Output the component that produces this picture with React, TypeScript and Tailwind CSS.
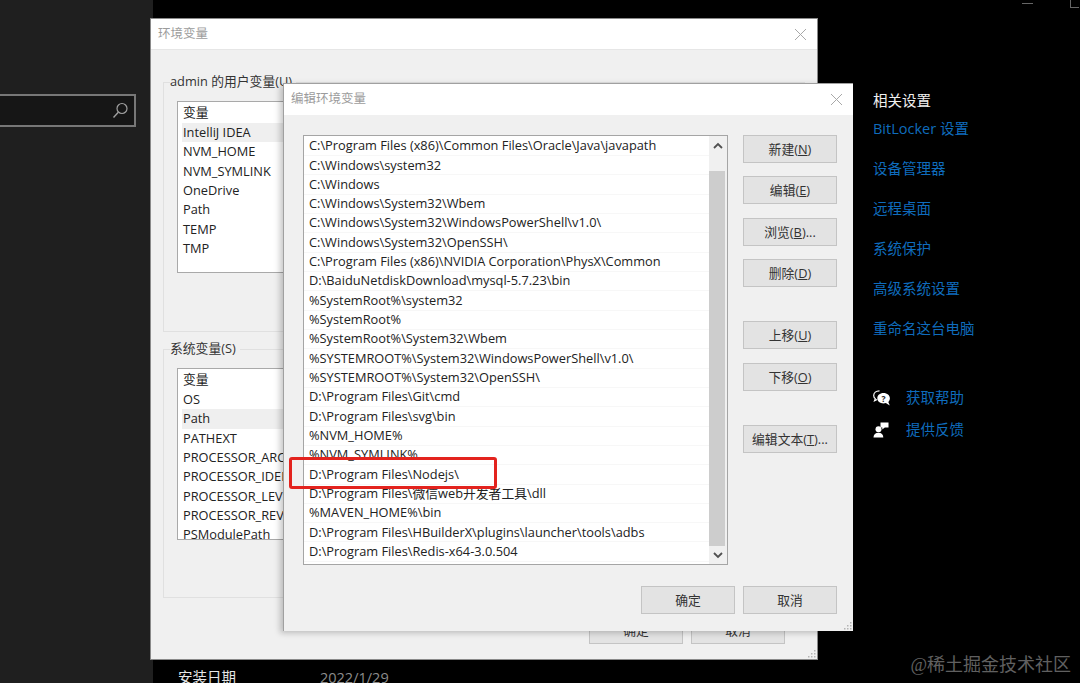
import React from 'react';

const FONT = 'font-["Open_Sans","Noto_Sans_CJK_SC",sans-serif]';

const pathRows = [
  'C:\\Program Files (x86)\\Common Files\\Oracle\\Java\\javapath',
  'C:\\Windows\\system32',
  'C:\\Windows',
  'C:\\Windows\\System32\\Wbem',
  'C:\\Windows\\System32\\WindowsPowerShell\\v1.0\\',
  'C:\\Windows\\System32\\OpenSSH\\',
  'C:\\Program Files (x86)\\NVIDIA Corporation\\PhysX\\Common',
  'D:\\BaiduNetdiskDownload\\mysql-5.7.23\\bin',
  '%SystemRoot%\\system32',
  '%SystemRoot%',
  '%SystemRoot%\\System32\\Wbem',
  '%SYSTEMROOT%\\System32\\WindowsPowerShell\\v1.0\\',
  '%SYSTEMROOT%\\System32\\OpenSSH\\',
  'D:\\Program Files\\Git\\cmd',
  'D:\\Program Files\\svg\\bin',
  '%NVM_HOME%',
  '%NVM_SYMLINK%',
  'D:\\Program Files\\Nodejs\\',
  'D:\\Program Files\\微信web开发者工具\\dll',
  '%MAVEN_HOME%\\bin',
  'D:\\Program Files\\HBuilderX\\plugins\\launcher\\tools\\adbs',
  'D:\\Program Files\\Redis-x64-3.0.504',
];

const userVars = ['IntelliJ IDEA', 'NVM_HOME', 'NVM_SYMLINK', 'OneDrive', 'Path', 'TEMP', 'TMP'];
const systemVars = ['OS', 'Path', 'PATHEXT', 'PROCESSOR_ARCHITECTURE', 'PROCESSOR_IDENTIFIER', 'PROCESSOR_LEVEL', 'PROCESSOR_REVISION', 'PSModulePath'];

const CloseIcon = () => (
  <svg width="13" height="13" viewBox="0 0 13 13" className="text-[#a8a8a8]">
    <path d="M1 1 L12 12 M12 1 L1 12" stroke="currentColor" strokeWidth="1" fill="none" />
  </svg>
);

const ResizeGrip = () => (
  <svg width="9" height="9" viewBox="0 0 9 9" className="absolute bottom-[1px] right-[1px]">
    <path d="M7 1h1.500v1.500H7zM4 4h1.500v1.500H4zM7 4h1.500v1.500H7zM1 7h1.500v1.500H1zM4 7h1.500v1.500H4zM7 7h1.500v1.500H7z" fill="#b4b4b4" />
  </svg>
);

const Button = ({ label, mn, suffix, className = '' }: { label: string; mn?: string; suffix?: string; className?: string }) => (
  <div className={`flex h-[28px] w-[94px] items-center justify-center border border-[#c4c4c4] bg-[#e3e3e3] text-[12.800px] leading-none text-[#333] ${className}`}>
    {label}
    {mn && (
      <>
        (<span className="underline">{mn}</span>)
      </>
    )}
    {suffix}
  </div>
);

const VarList = ({ rows, selected }: { rows: string[]; selected: number }) => (
  <div className="h-[172px] w-[300px] overflow-hidden border border-[#a9a9a9] bg-white pl-[4px] pt-[1px] text-[12.800px] text-[#222]">
    <div className="flex h-[20px] items-center pl-[1px]">变量</div>
    {rows.map((r, i) => (
      <div key={r} className={`flex h-[19.33px] items-center whitespace-nowrap pl-[1px] ${i === selected ? 'bg-[#efefef]' : ''}`}>
        {r}
      </div>
    ))}
  </div>
);

const GroupBox = ({ label, className = '', children }: { label: string; className?: string; children: React.ReactNode }) => (
  <div className={`w-[642px] border border-[#e0e0e0] ${className}`}>
    <div className="-mt-[11px] ml-[6px] w-fit bg-[#f0f0f0] pr-[4px] text-[12.800px] leading-[18px] text-[#333]">{label}</div>
    {children}
  </div>
);

const EnvWindow = () => (
  <div className="absolute left-[150px] top-[18px] flex h-[642px] w-[668px] flex-col border border-[#8a8a8a] bg-[#f0f0f0]">
    <div className="flex h-[31px] shrink-0 items-center justify-between border-b border-[#e6e6e6] bg-white pl-[7px] pr-[10px] text-[12.500px] text-[#9c9c9c]">
      <span>环境变量</span>
      <CloseIcon />
    </div>
    <div className="flex flex-1 flex-col pl-[12px] pt-[32px]">
      <GroupBox label="admin 的用户变量(U)" className="h-[250px]">
        <div className="pl-[13px] pt-[11px]">
          <VarList rows={userVars} selected={0} />
        </div>
      </GroupBox>
      <GroupBox label="系统变量(S)" className="mt-[17px] h-[249px]">
        <div className="pl-[13px] pt-[11px]">
          <VarList rows={systemVars} selected={1} />
        </div>
      </GroupBox>
      <div className="ml-[426px] mt-[18px] flex gap-[8px]">
        <Button label="确定" />
        <Button label="取消" />
      </div>
    </div>
    <ResizeGrip />
  </div>
);

const Scrollbar = () => (
  <div className="flex w-[18px] shrink-0 flex-col bg-[#f0f0f0]">
    <div className="flex h-[35px] w-full justify-center pt-[6px]">
      <svg width="10" height="8" viewBox="0 0 10 8">
        <path d="M1 6 L5 2 L9 6" stroke="#505050" strokeWidth="1.800" fill="none" />
      </svg>
    </div>
    <div className="w-[16px] flex-1 bg-[#cdcdcd]" />
    <div className="flex h-[18px] w-full items-center justify-center">
      <svg width="10" height="8" viewBox="0 0 10 8">
        <path d="M1 2 L5 6 L9 2" stroke="#505050" strokeWidth="1.800" fill="none" />
      </svg>
    </div>
  </div>
);

const EditWindow = () => (
  <div className="absolute left-[283px] top-[83px] flex h-[548px] w-[570px] flex-col border-l border-t border-[#a0a0a0] bg-[#f0f0f0] shadow-[-3px_2px_6px_rgba(0,0,0,0.22)]">
    <div className="flex h-[31px] shrink-0 items-center justify-between bg-white pl-[7px] pr-[10px] text-[12.500px] text-[#9c9c9c]">
      <span>编辑环境变量</span>
      <CloseIcon />
    </div>
    <div className="flex pl-[19px] pt-[20px]">
      <div className="flex h-[430px] w-[425px] shrink-0 border border-[#a5a5a5] bg-white">
        <div className="flex-1 pt-[0.600px] text-[12.800px] text-[#222]">
          {pathRows.map((r) => (
            <div key={r} className="flex h-[19.33px] items-center whitespace-nowrap border-b border-[#f7f7f7] pl-[5px]">
              {r}
            </div>
          ))}
        </div>
        <Scrollbar />
      </div>
      <div className="ml-[15px] flex flex-col">
        <Button label="新建" mn="N" />
        <Button label="编辑" mn="E" className="mt-[13px]" />
        <Button label="浏览" mn="B" suffix="..." className="mt-[14px]" />
        <Button label="删除" mn="D" className="mt-[13px]" />
        <Button label="上移" mn="U" className="mt-[34px]" />
        <Button label="下移" mn="O" className="mt-[14px]" />
        <Button label="编辑文本" mn="T" suffix="..." className="mt-[34px]" />
      </div>
    </div>
    <div className="ml-[357px] mt-[21px] flex gap-[8px]">
      <Button label="确定" />
      <Button label="取消" />
    </div>
    <ResizeGrip />
  </div>
);

const HelpIcon = () => (
  <svg width="18" height="17" viewBox="0 0 18 17">
    <path d="M6.500 0.800C3 0.800 0.700 2.900 0.700 5.400C0.700 6.700 1.300 7.800 2.300 8.600L1.500 10.800L4.200 9.500" stroke="#fff" strokeWidth="1.200" fill="none" />
    <path d="M10.500 3C6.900 3 4.300 5.300 4.300 8.200C4.300 11.100 6.900 13.400 10.500 13.400C11.300 13.400 12.100 13.300 12.800 13L16.800 15.600L15.300 12C16.300 11 16.900 9.700 16.900 8.200C16.900 5.300 14.100 3 10.500 3Z" fill="#fff" />
    <text x="10.500" y="11.500" textAnchor="middle" fontSize="8.500" fontWeight="700" fill="#222" fontFamily="Open Sans, sans-serif">?</text>
  </svg>
);

const FeedbackIcon = () => (
  <svg width="16" height="16" viewBox="0 0 16 16">
    <circle cx="5.500" cy="7.200" r="3" fill="#fff" />
    <path d="M0.500 15.500C0.500 12.500 2.500 10.700 5.500 10.700C8.500 10.700 10.300 12.500 10.300 15.500Z" fill="#fff" />
    <path d="M7.500 0.500H15.500V5.500H11.800L9.300 7.500V5.500H7.500Z" fill="#fff" />
  </svg>
);

const relatedLinks = ['BitLocker 设置', '设备管理器', '远程桌面', '系统保护', '高级系统设置', '重命名这台电脑'];

export default function App() {
  return (
    <div className={`relative flex h-[683px] w-[1080px] overflow-hidden bg-black ${FONT}`}>
      {/* Settings sidebar */}
      <div className="w-[153px] shrink-0 bg-[#1f1f1f] pr-[17px] pt-[94px]">
        <div className="flex h-[33px] items-center justify-end border-2 border-l-0 border-[#777] bg-[#161616] pr-[5px]">
          <svg width="17" height="17" viewBox="0 0 17 17">
            <circle cx="10" cy="6.500" r="5" stroke="#a0a0a0" strokeWidth="1.200" fill="none" />
            <path d="M6.300 10.200 L1.500 15.500" stroke="#a0a0a0" strokeWidth="1.400" />
          </svg>
        </div>
      </div>

      {/* Main content, mostly under the dialogs */}
      <div className="flex w-[720px] shrink-0 flex-col justify-end">
        <div className="flex h-[14px] items-start overflow-hidden pl-[25px] text-[14.500px] leading-[18px] text-[#e6e6e6]">
          <span className="w-[142px]">安装日期</span>
          <span className="text-[#8c8c8c]">2022/1/29</span>
        </div>
      </div>

      {/* Related settings */}
      <div className="flex flex-col pt-[92px] text-[14.500px] leading-[18px]">
        <div className="text-[#f0f0f0]">相关设置</div>
        <div className="mt-[10px] flex flex-col gap-[22px] text-[#0f6cbd]">
          {relatedLinks.map((l) => (
            <div key={l} className="whitespace-nowrap">
              {l}
            </div>
          ))}
        </div>
        <div className="mt-[51px] flex items-center text-[#0f6cbd]">
          <span className="flex w-[33px]">
            <HelpIcon />
          </span>
          获取帮助
        </div>
        <div className="mt-[14px] flex items-center text-[#0f6cbd]">
          <span className="flex w-[33px]">
            <FeedbackIcon />
          </span>
          提供反馈
        </div>
      </div>

      <EnvWindow />
      <EditWindow />

      {/* Red annotation around the Nodejs row */}
      <div className="absolute left-[289px] top-[457px] h-[32px] w-[208px] rounded-[3px] border-[3px] border-[#e3231e]" />

      {/* Parent window controls, cut off at the top */}
      <div className="absolute left-[1022px] top-[3px] h-px w-[11px] bg-[#666]" />
      <div className="absolute left-[1070px] top-0 h-[8px] w-[9px] border-b border-l border-[#666]" />

      {/* Watermark */}
      <div className="absolute bottom-[6px] right-[9px] font-['Liberation_Serif','Noto_Sans_CJK_SC',serif] text-[18px] leading-[24px] text-[#606060]">
        @稀土掘金技术社区
      </div>
    </div>
  );
}
